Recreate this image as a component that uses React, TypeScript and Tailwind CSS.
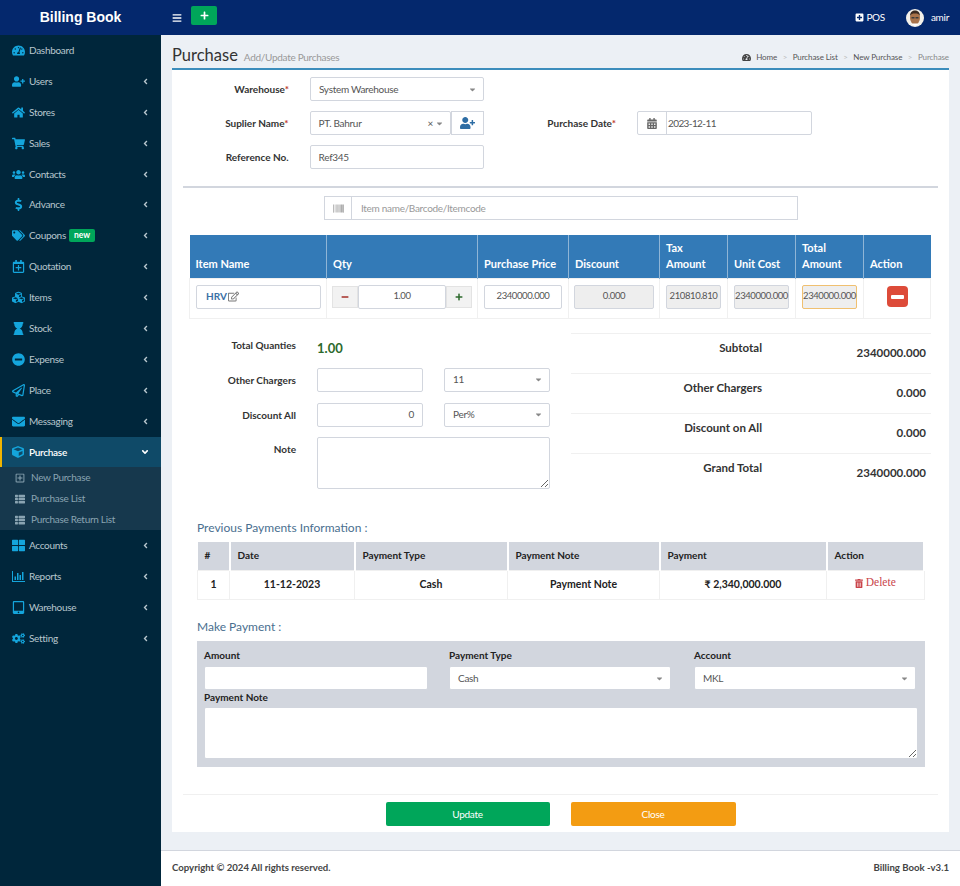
import type { ComponentType, ReactNode } from "react";
import {
  FaAngleDown,
  FaAngleLeft,
  FaBarcode,
  FaBars,
  FaCalendarAlt,
  FaCaretDown,
  FaCogs,
  FaCube,
  FaCubes,
  FaDollarSign,
  FaEnvelope,
  FaHome,
  FaHourglass,
  FaMinus,
  FaMinusCircle,
  FaPlus,
  FaPlusSquare,
  FaRegCalendarPlus,
  FaRegEdit,
  FaRegPaperPlane,
  FaRegPlusSquare,
  FaShoppingCart,
  FaTabletAlt,
  FaTachometerAlt,
  FaTags,
  FaThLarge,
  FaThList,
  FaTrashAlt,
  FaUserPlus,
  FaUsers,
} from "react-icons/fa";

type Icon = ComponentType<{ className?: string }>;

// fa-bar-chart-o from the old icon set: bars standing on an axis
function BarChartIcon({ className }: { className?: string }) {
  return (
    <svg viewBox="0 0 13 13" fill="currentColor" className={className}>
      <path d="M0 1h1v10h12v1H0z" />
      <path d="M2.500 6.500h1.500V10H2.500zM5 3h1.500v7H5zM7.500 5h1.500v5H7.500zM10 2h1.500v8H10z" />
    </svg>
  );
}

const MENU_TOP: { label: string; icon: Icon; badge?: boolean }[] = [
  { label: "Users", icon: FaUserPlus },
  { label: "Stores", icon: FaHome },
  { label: "Sales", icon: FaShoppingCart },
  { label: "Contacts", icon: FaUsers },
  { label: "Advance", icon: FaDollarSign },
  { label: "Coupons", icon: FaTags, badge: true },
  { label: "Quotation", icon: FaRegCalendarPlus },
  { label: "Items", icon: FaCubes },
  { label: "Stock", icon: FaHourglass },
  { label: "Expense", icon: FaMinusCircle },
  { label: "Place", icon: FaRegPaperPlane },
  { label: "Messaging", icon: FaEnvelope },
];

const MENU_BOTTOM: { label: string; icon: Icon }[] = [
  { label: "Accounts", icon: FaThLarge },
  { label: "Reports", icon: BarChartIcon },
  { label: "Warehouse", icon: FaTabletAlt },
  { label: "Setting", icon: FaCogs },
];

const SUB_MENU: { label: string; icon: Icon }[] = [
  { label: "New Purchase", icon: FaRegPlusSquare },
  { label: "Purchase List", icon: FaThList },
  { label: "Purchase Return List", icon: FaThList },
];

function MenuItem({ label, icon: Ico, badge, arrow = true }: { label: string; icon: Icon; badge?: boolean; arrow?: boolean }) {
  return (
    <div className="flex h-[30.900px] items-center pl-3 pr-[11px] text-[#b8c7ce]">
      <Ico className="h-[13px] w-[13px] shrink-0 text-[#14a5dc]" />
      <span className="ml-[4px]">{label}</span>
      {badge && <span className="ml-[3px] rounded-[2px] bg-[#00a65a] px-[5px] text-[8.500px] font-bold leading-[13px] tracking-normal text-white">new</span>}
      {arrow && <FaAngleLeft className="ml-auto h-[9px] w-[9px]" />}
    </div>
  );
}

function Sidebar() {
  return (
    <aside className="w-[161px] shrink-0 bg-[#00263b]">
      <MenuItem label="Dashboard" icon={FaTachometerAlt} arrow={false} />
      {MENU_TOP.map((m) => (
        <MenuItem key={m.label} {...m} />
      ))}
      <div className="flex h-[30.900px] items-center border-l-[2px] border-[#f0b400] bg-[#0f4a68] pl-[10px] pr-[11px] font-semibold text-white">
        <FaCube className="h-[12px] w-[12px] text-[#14a5dc]" />
        <span className="ml-[5px]">Purchase</span>
        <FaAngleDown className="ml-auto h-[10px] w-[10px]" />
      </div>
      <div className="bg-[#16384d]">
        {SUB_MENU.map(({ label, icon: Ico }) => (
          <div key={label} className="flex h-[21px] items-center pl-[15px] text-[#8aa4b2]">
            <Ico className="h-[10px] w-[10px]" />
            <span className="ml-[6px]">{label}</span>
          </div>
        ))}
      </div>
      {MENU_BOTTOM.map((m) => (
        <MenuItem key={m.label} {...m} />
      ))}
    </aside>
  );
}

function Avatar() {
  return (
    <svg viewBox="0 0 18 18" className="h-[18px] w-[18px]">
      <circle cx="9" cy="9" r="9" fill="#f4f1ea" />
      <ellipse cx="9" cy="9" rx="5" ry="6.400" fill="#a9734a" />
      <path d="M4 7c0-4 2.500-5.500 5-5.500S14 3 14 7c-1-2-2.500-2.500-5-2.500S5 5 4 7z" fill="#3b2a20" />
      <path d="M5.500 8h3v1.500h-3zM9.500 8h3v1.500h-3z" fill="#3c3c3c" />
      <path d="M6 15.500c1 1.500 5 1.500 6 0l-1-1H7z" fill="#fff" />
    </svg>
  );
}

function Field({ className = "", children }: { className?: string; children?: ReactNode }) {
  return <div className={`flex h-[24px] items-center rounded-[2px] border border-[#d2d6de] bg-white px-2 text-[#555] ${className}`}>{children}</div>;
}

function SelectBox({ value, className = "" }: { value: string; className?: string }) {
  return (
    <Field className={className}>
      <span>{value}</span>
      <FaCaretDown className="-mr-[2px] ml-auto h-[9px] w-[9px] text-[#888]" />
    </Field>
  );
}

function FormLabel({ children, className = "" }: { children: ReactNode; className?: string }) {
  return <div className={`text-right font-bold tracking-normal text-[#333] ${className}`}>{children}</div>;
}

const Star = () => <span className="text-[#c0392b]">*</span>;

function ItemsTable() {
  const th = "border-r border-[#8fb5d6] px-[6px] pb-[6px] align-bottom text-left text-[11px] font-bold leading-[16px] tracking-normal text-white";
  const td = "border border-[#f0f0f0] pb-[3px] align-middle";
  const num = "text-[9.500px] tracking-[-0.400px]";
  const ro = `flex h-[24px] items-center justify-center rounded-[2px] border bg-[#eee] text-[#555] ${num}`;
  return (
    <table className="ml-[17px] w-[742px] table-fixed border-collapse">
      <thead>
        <tr className="h-[43px] bg-[#337ab7]">
          <th className={`${th} w-[137px]`}>Item Name</th>
          <th className={`${th} w-[151px]`}>Qty</th>
          <th className={`${th} w-[91px]`}>Purchase Price</th>
          <th className={`${th} w-[91px]`}>Discount</th>
          <th className={`${th} w-[68px]`}>Tax<br />Amount</th>
          <th className={`${th} w-[68px]`}>Unit Cost</th>
          <th className={`${th} w-[68px]`}>Total<br />Amount</th>
          <th className={`${th} border-r-0`}>Action</th>
        </tr>
      </thead>
      <tbody>
        <tr className="h-[40px]">
          <td className={`${td} pl-[6px] pr-[5px]`}>
            <Field className="pl-[9px]">
              <span className="font-bold tracking-normal text-[#3a6fa5]">HRV</span>
              <FaRegEdit className="ml-[1px] h-[11px] w-[11px] text-[#777]" />
            </Field>
          </td>
          <td className={`${td} px-[5px]`}>
            <div className="flex">
              <div className="mt-[1px] flex h-[22px] w-[26px] items-center justify-center border border-[#e3e3e3] bg-[#f2f2f2]">
                <FaMinus className="h-[8px] w-[8px] text-[#a5302a]" />
              </div>
              <Field className={`w-[88px] justify-center ${num}`}>1.00</Field>
              <div className="mt-[1px] flex h-[22px] w-[26px] items-center justify-center border border-[#e3e3e3] bg-[#f2f2f2]">
                <FaPlus className="h-[8px] w-[8px] text-[#2d6a2d]" />
              </div>
            </div>
          </td>
          <td className={`${td} px-[6px]`}>
            <Field className={`justify-center px-0 ${num}`}>2340000.000</Field>
          </td>
          <td className={`${td} px-[5px]`}>
            <div className={`${ro} border-[#d2d6de]`}>0.000</div>
          </td>
          <td className={`${td} px-[6px]`}>
            <div className={`${ro} border-[#d2d6de]`}>210810.810</div>
          </td>
          <td className={`${td} px-[6px]`}>
            <div className={`${ro} border-[#d2d6de]`}>2340000.000</div>
          </td>
          <td className={`${td} px-[6px]`}>
            <div className={`${ro} border-[#f0c070]`}>2340000.000</div>
          </td>
          <td className={td}>
            <div className="mx-auto flex h-[21px] w-[21px] items-center justify-center rounded-[4px] bg-[#dd4b39]">
              <div className="h-[4px] w-[13px] rounded-[1px] bg-white" />
            </div>
          </td>
        </tr>
      </tbody>
    </table>
  );
}

function TotalRow({ label, value }: { label: string; value: string }) {
  return (
    <div className="flex h-[40px] border-t border-[#f0f0f0] text-[11.500px] font-bold tracking-normal text-[#333]">
      <div className="w-[191px] pt-[5px] text-right">{label}</div>
      <div className="flex-1 pr-[5px] pt-[10px] text-right">{value}</div>
    </div>
  );
}

function PaymentsTable() {
  const th = "border-r-[2px] border-white px-[7px] text-left text-[10px] font-bold tracking-normal text-[#222]";
  const td = "border border-[#f0f0f0] text-center text-[10.500px] font-bold tracking-normal text-[#222]";
  return (
    <table className="w-[728px] table-fixed border-collapse">
      <thead>
        <tr className="h-[29px] bg-[#d2d6de]">
          <th className={`${th} w-[32px]`}>#</th>
          <th className={`${th} w-[125px]`}>Date</th>
          <th className={`${th} w-[153px]`}>Payment Type</th>
          <th className={`${th} w-[152px]`}>Payment Note</th>
          <th className={`${th} w-[167px]`}>Payment</th>
          <th className={`${th} border-r-0`}>Action</th>
        </tr>
      </thead>
      <tbody>
        <tr className="h-[29px]">
          <td className={td}>1</td>
          <td className={td}>11-12-2023</td>
          <td className={td}>Cash</td>
          <td className={td}>Payment Note</td>
          <td className={td}>₹ 2,340,000.000</td>
          <td className="border border-[#f0f0f0] pb-[4px] text-center">
            <span className="inline-flex items-center font-['Liberation_Serif',serif] text-[11.500px] tracking-normal text-[#c9444a]">
              <FaTrashAlt className="mr-[3px] h-[9px] w-[8px]" />
              Delete
            </span>
          </td>
        </tr>
      </tbody>
    </table>
  );
}

export default function App() {
  return (
    <div className="min-h-[886px] w-[960px] bg-[#ecf0f5] font-['Lato',sans-serif] text-[10px] tracking-[-0.300px] text-[#333]">
      <header className="flex h-[35px] items-center bg-[#04286d] text-white">
        <div className="w-[161px] text-center font-['Liberation_Sans',sans-serif] text-[14px] font-bold tracking-normal">Billing Book</div>
        <FaBars className="ml-[11px] h-[10px] w-[10px]" />
        <div className="mb-[5px] ml-[9px] flex h-[19px] w-[26px] items-center justify-center rounded-[2px] bg-[#00a65a]">
          <FaPlus className="h-[9px] w-[9px]" />
        </div>
        <div className="ml-auto flex items-center">
          <FaPlusSquare className="h-[9px] w-[9px]" />
          <span className="ml-[2px]">POS</span>
          <div className="ml-[21px]">
            <Avatar />
          </div>
          <span className="ml-[7px] mr-[11px]">amir</span>
        </div>
      </header>

      <div className="flex">
        <Sidebar />
        <main className="min-w-0 flex-1">
          <div className="flex h-[33px] items-end justify-between px-[11px] pb-[3px]">
            <div className="flex items-baseline">
              <span className="text-[16.500px] leading-[20px] tracking-normal text-[#333]">Purchase</span>
              <span className="ml-[6px] text-[#999]">Add/Update Purchases</span>
            </div>
            <div className="mb-[2px] flex items-center gap-[5.500px] text-[8px] tracking-[-0.100px] text-[#555]">
              <FaTachometerAlt className="h-[9px] w-[9px] text-[#444]" />
              <span>Home</span>
              <span className="text-[#bbb]">&gt;</span>
              <span>Purchase List</span>
              <span className="text-[#bbb]">&gt;</span>
              <span>New Purchase</span>
              <span className="text-[#bbb]">&gt;</span>
              <span className="text-[#888]">Purchase</span>
            </div>
          </div>

          <section className="mx-[11px] h-[764px] border-t-[2px] border-[#3c8dbc] bg-white">
            <div className="flex pt-[7px]">
              <div className="w-[312px]">
                <div className="flex h-[24px] items-center">
                  <FormLabel className="w-[117px]">Warehouse<Star /></FormLabel>
                  <SelectBox value="System Warehouse" className="ml-[21px] w-[174px]" />
                </div>
                <div className="mt-[10px] flex h-[24px] items-center">
                  <FormLabel className="w-[117px]">Suplier Name<Star /></FormLabel>
                  <Field className="ml-[21px] w-[142px]">
                    <span>PT. Bahrur</span>
                    <span className="ml-auto text-[#555]">×</span>
                    <FaCaretDown className="-mr-[2px] ml-[2px] h-[9px] w-[9px] text-[#888]" />
                  </Field>
                  <div className="flex h-[24px] w-[33px] items-center justify-center border border-[#d2d6de]">
                    <FaUserPlus className="h-[12px] w-[15px] text-[#2e6da4]" />
                  </div>
                </div>
                <div className="mt-[10px] flex h-[24px] items-center">
                  <FormLabel className="w-[117px]">Reference No.</FormLabel>
                  <Field className="ml-[21px] w-[175px]">Ref345</Field>
                </div>
              </div>
              <div className="mt-[34px] flex h-[24px] items-center">
                <FormLabel className="w-[132px]">Purchase Date<Star /></FormLabel>
                <div className="ml-[21px] flex h-[24px] w-[175px] rounded-[2px] border border-[#d2d6de]">
                  <div className="flex w-[29px] items-center justify-center border-r border-[#d2d6de]">
                    <FaCalendarAlt className="h-[11px] w-[10px] text-[#666]" />
                  </div>
                  <span className="self-center pl-[1px] tracking-[-0.600px] text-[#555]">2023-12-11</span>
                </div>
              </div>
            </div>

            <div className="mx-[11px] mt-[17px] h-[2px] bg-[#d2d6de]" />

            <div className="ml-[152px] mt-[8px] flex h-[24px] w-[474px] border border-[#d2d6de]">
              <div className="flex w-[27px] items-center justify-center border-r border-[#d2d6de]">
                <FaBarcode className="h-[11px] w-[11px] text-[#888]" />
              </div>
              <span className="self-center pl-[9px] text-[#999]">Item name/Barcode/Itemcode</span>
            </div>

            <div className="mt-[15px]">
              <ItemsTable />
            </div>

            <div className="mt-[14px] flex">
              <div className="w-[399px]">
                <div className="flex h-[24px] items-center">
                  <FormLabel className="mt-[2px] w-[124px]">Total Quanties</FormLabel>
                  <span className="ml-[21px] mt-[8px] text-[13px] font-bold tracking-normal text-[#2d6a2d]">1.00</span>
                </div>
                <div className="mt-[11px] flex h-[24px] items-center">
                  <FormLabel className="mt-[2px] w-[124px]">Other Chargers</FormLabel>
                  <Field className="ml-[21px] w-[106px]" />
                  <SelectBox value="11" className="ml-[21px] w-[106px]" />
                </div>
                <div className="mt-[11px] flex h-[24px] items-center">
                  <FormLabel className="mt-[2px] w-[124px]">Discount All</FormLabel>
                  <Field className="ml-[21px] w-[106px] justify-end">0</Field>
                  <SelectBox value="Per%" className="ml-[21px] w-[106px]" />
                </div>
                <div className="mt-[10px] flex">
                  <FormLabel className="mt-[5px] w-[124px]">Note</FormLabel>
                  <textarea readOnly className="ml-[21px] h-[52px] w-[233px] rounded-[2px] border border-[#d2d6de] bg-white" />
                </div>
              </div>
              <div className="w-[360px]">
                <TotalRow label="Subtotal" value="2340000.000" />
                <TotalRow label="Other Chargers" value="0.000" />
                <TotalRow label="Discount on All" value="0.000" />
                <TotalRow label="Grand Total" value="2340000.000" />
              </div>
            </div>

            <div className="ml-[25px] mt-[27px] w-[728px]">
              <h3 className="text-[12px] leading-[16px] tracking-normal text-[#4a6f8f]">Previous Payments Information :</h3>
              <div className="mt-[6px]">
                <PaymentsTable />
              </div>
              <h3 className="mt-[19px] text-[12px] leading-[16px] tracking-normal text-[#4a6f8f]">Make Payment :</h3>
              <div className="mt-[6px] h-[126px] bg-[#d2d6de] px-[7px] pt-[8px]">
                <div className="flex">
                  <div className="w-[224px]">
                    <div className="h-[17px] font-bold leading-[12px] tracking-normal text-[#222]">Amount</div>
                    <Field />
                  </div>
                  <div className="ml-[21px] w-[222px]">
                    <div className="h-[17px] font-bold leading-[12px] tracking-normal text-[#222]">Payment Type</div>
                    <SelectBox value="Cash" />
                  </div>
                  <div className="ml-[23px] w-[222px]">
                    <div className="h-[17px] font-bold leading-[12px] tracking-normal text-[#222]">Account</div>
                    <SelectBox value="MKL" />
                  </div>
                </div>
                <div className="mt-[1px] h-[16px] font-bold leading-[12px] tracking-normal text-[#222]">Payment Note</div>
                <textarea readOnly className="block h-[52px] w-[714px] rounded-[2px] border border-[#d2d6de] bg-white" />
              </div>
            </div>

            <div className="mx-[11px] mt-[27px] h-px bg-[#f0f0f0]" />
            <div className="mt-[7px] flex justify-center gap-[21px]">
              <div className="flex h-[24px] w-[164px] items-center justify-center rounded-[2px] bg-[#00a65a] text-white">Update</div>
              <div className="flex h-[24px] w-[165px] items-center justify-center rounded-[2px] bg-[#f39c12] text-white">Close</div>
            </div>
          </section>

          <footer className="mt-[18px] flex h-[36px] items-center justify-between border-t border-[#d2d6de] bg-white px-[11px] text-[9.600px] font-bold tracking-normal text-[#444]">
            <span>Copyright © 2024 All rights reserved.</span>
            <span>Billing Book -v3.1</span>
          </footer>
        </main>
      </div>
    </div>
  );
}
